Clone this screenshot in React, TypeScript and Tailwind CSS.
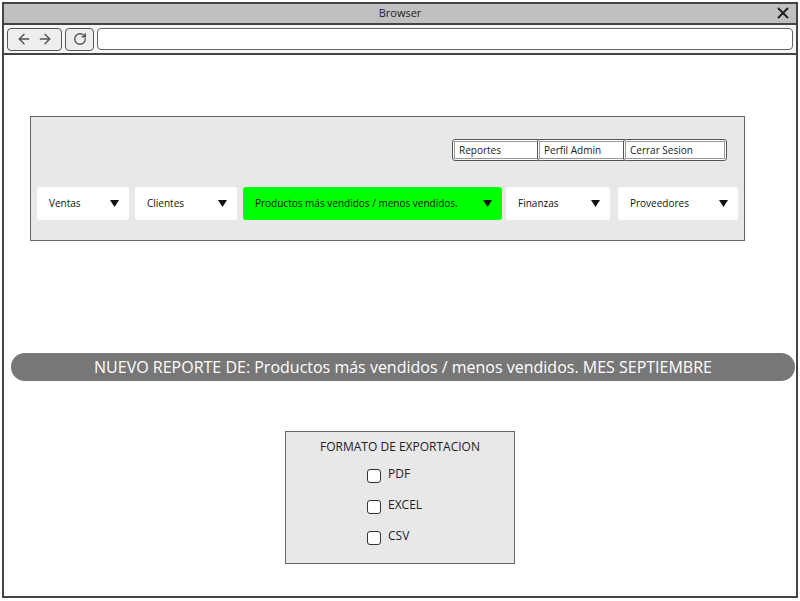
import { ArrowLeft, ArrowRight, RotateCw, X } from "lucide-react";

const FONT = { fontFamily: '"Open Sans", "DejaVu Sans", sans-serif' };

type MenuItem = { label: string; width: string; margin: string; active?: boolean };

const MENU: MenuItem[] = [
  { label: "Ventas", width: "w-[92px]", margin: "ml-0" },
  { label: "Clientes", width: "w-[102px]", margin: "ml-[6px]" },
  { label: "Productos más vendidos / menos vendidos.", width: "w-[259px]", margin: "ml-[6px]", active: true },
  { label: "Finanzas", width: "w-[104px]", margin: "ml-[4px]" },
  { label: "Proveedores", width: "w-[120px]", margin: "ml-[8px]" },
];

function Caret() {
  return (
    <svg width="9" height="7" viewBox="0 0 9 7" aria-hidden="true">
      <path d="M0 0 H9 L4.5 7 Z" fill="#111" />
    </svg>
  );
}

function TopButton({ label, width, first }: { label: string; width: string; first?: boolean }) {
  return (
    <div
      className={[
        "h-[22px] rounded-[3px] border border-[#555] bg-white p-[1px]",
        width,
        first ? "" : "-ml-[4px]",
      ].join(" ")}
    >
      <div className="flex h-full items-center border border-[#999] bg-white px-[4px] text-[10px] text-[#222]">
        {label}
      </div>
    </div>
  );
}

function Checkbox({ label }: { label: string }) {
  return (
    <div className="flex items-center gap-[7px]">
      <span className="h-[14px] w-[14px] rounded-[3px] border-[1.5px] border-[#333] bg-white" />
      <span className="-mt-[4px] text-[12px] text-[#222]">{label}</span>
    </div>
  );
}

export default function App() {
  return (
    <div className="h-[601px] w-[800px] bg-white p-[2px]" style={FONT}>
      <div className="flex h-[596px] w-[796px] flex-col border-2 border-[#444]">
        <div className="relative flex h-[19px] items-center justify-center bg-[#c0c0c0] text-[11px] text-[#222]">
          Browser
          <X className="absolute right-[4px] top-0 text-[#222]" size={18} strokeWidth={2.5} />
        </div>
        <div className="h-[2px] bg-[#444]" />
        <div className="flex h-[28px] items-center gap-[3px] bg-[#f7f7f7] px-[3px]">
          <div className="flex h-[23px] w-[55px] items-center justify-center gap-[5px] rounded-[4px] border-[1.5px] border-[#555] bg-[#eee] text-[#555]">
            <ArrowLeft size={16} strokeWidth={2.2} />
            <ArrowRight size={16} strokeWidth={2.2} />
          </div>
          <div className="flex h-[23px] w-[29px] items-center justify-center rounded-[4px] border-[1.5px] border-[#555] bg-[#eee] text-[#555]">
            <RotateCw size={14} strokeWidth={2.5} />
          </div>
          <div className="h-[22px] flex-1 rounded-[4px] border-[1.5px] border-[#666] bg-white" />
        </div>
        <div className="h-[2px] bg-[#444]" />

        <div className="ml-[26px] mt-[61px] flex h-[125px] w-[715px] flex-col border border-[#666] bg-[#e8e8e8]">
          <div className="mr-[17px] mt-[22px] flex justify-end">
            <TopButton label="Reportes" width="w-[89px]" first />
            <TopButton label="Perfil Admin" width="w-[90px]" />
            <TopButton label="Cerrar Sesion" width="w-[104px]" />
          </div>
          <div className="ml-[6px] mt-[26px] flex">
            {MENU.map((item) => (
              <div
                key={item.label}
                className={[
                  "flex h-[33px] items-center justify-between rounded-[3px] pl-[12px] pr-[10px] text-[10px] text-[#111]",
                  item.width,
                  item.margin,
                  item.active ? "bg-[#00ff00]" : "bg-white",
                ].join(" ")}
              >
                <span>{item.label}</span>
                <Caret />
              </div>
            ))}
          </div>
        </div>

        <div className="ml-[7px] mr-[1px] mt-[112px] flex h-[28px] items-center justify-center rounded-full bg-[#777] text-[16px] text-white">
          NUEVO REPORTE DE: Productos más vendidos / menos vendidos. MES SEPTIEMBRE
        </div>

        <div className="ml-[281px] mt-[50px] flex h-[133px] w-[230px] flex-col border border-[#666] bg-[#e8e8e8]">
          <div className="mt-[6px] text-center text-[12px] text-[#222]">FORMATO DE EXPORTACION</div>
          <div className="ml-[81px] mt-[13px] flex flex-col gap-[17px]">
            <Checkbox label="PDF" />
            <Checkbox label="EXCEL" />
            <Checkbox label="CSV" />
          </div>
        </div>
      </div>
    </div>
  );
}
